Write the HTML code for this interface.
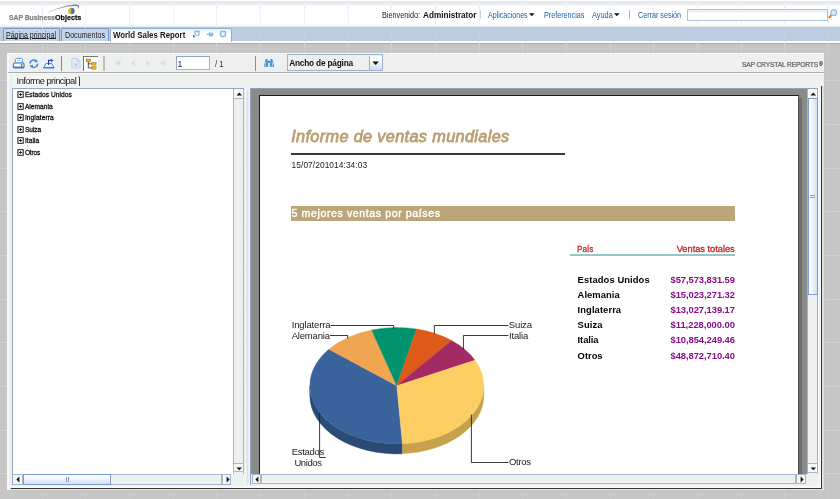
<!DOCTYPE html>
<html><head><meta charset="utf-8"><title>World Sales Report</title>
<style>
html,body{margin:0;padding:0}
body{width:840px;height:499px;overflow:hidden;background:#c6c6c6;position:relative;font-family:"Liberation Sans",Arial,sans-serif}
.abs{position:absolute}
.t{position:absolute;white-space:nowrap;line-height:12px;height:12px;font-family:"Liberation Sans",Arial,sans-serif}
div{position:absolute;box-sizing:border-box}
</style></head><body><div id="root" style="left:0;top:0;width:840px;height:499px;overflow:hidden;will-change:transform">
<!-- header -->
<div style="left:0;top:0;width:840px;height:27px;background:linear-gradient(#fff 0,#fbfbfd 1px,#e3e7ee 1.6px,#e6e9f0 3.5px,#f4f5f8 5px,#fff 6px,#fff 24px,#e4eaf3 27px)"></div>
<div style="left:0;top:26.6px;width:840px;height:14.4px;background:#bccde1;border-top:1px solid #b3c6de"></div>
<div style="left:0;top:41px;width:840px;height:2px;background:#fdfdfd"></div>
<div style="left:0;top:43px;width:840px;height:1px;background:#a9a9a9"></div>
<!-- tabs -->
<div style="left:3px;top:28px;width:57px;height:13px;background:#c5d5e9;border:1px solid #7a97bf;border-bottom:none;border-radius:2px 2px 0 0"></div>
<div style="left:61px;top:28px;width:48px;height:13px;background:#c5d5e9;border:1px solid #7a97bf;border-bottom:none;border-radius:2px 2px 0 0"></div>
<!-- grid overlay (faint) -->
<div style="left:0;top:0;width:840px;height:499px;clip-path:inset(0px 0 472px 0);background:repeating-linear-gradient(90deg,transparent 0,transparent 41.75px,#eef0f8 41.75px,#eef0f8 42.75px,transparent 42.75px,transparent 43.68px)"></div>
<div style="left:0;top:0;width:840px;height:499px;clip-path:inset(27px 0 458px 0);background:repeating-linear-gradient(90deg,transparent 0,transparent 41.75px,#c1d1e4 41.75px,#c1d1e4 42.75px,transparent 42.75px,transparent 43.68px)"></div>
<div style="left:0;top:0;width:840px;height:499px;clip-path:inset(41px 0 456px 0);background:repeating-linear-gradient(90deg,transparent 0,transparent 41.75px,#eef0f8 41.75px,#eef0f8 42.75px,transparent 42.75px,transparent 43.68px)"></div>
<div style="left:0;top:0;width:840px;height:499px;clip-path:inset(43px 0 446px 0);background:repeating-linear-gradient(90deg,transparent 0,transparent 41.75px,#cfcfd3 41.75px,#cfcfd3 42.75px,transparent 42.75px,transparent 43.68px)"></div>
<div style="left:0;top:0;width:840px;height:499px;clip-path:inset(53px 0 0px 0);background:repeating-linear-gradient(90deg,transparent 0,transparent 41.75px,#cbcbce 41.75px,#cbcbce 42.75px,transparent 42.75px,transparent 43.68px),repeating-linear-gradient(180deg,transparent 0,transparent 36.5px,#d0d0d4 36.5px,#d0d0d4 37.5px,transparent 37.5px,transparent 43.68px)"></div>

<div style="left:109.5px;top:28px;width:122px;height:14px;background:linear-gradient(#e9f0f8 0,#fff 5px);border:1px solid #93aed0;border-bottom:none;border-radius:2px 2px 0 0"></div>

<!-- logo -->
<svg class="abs" style="left:0;top:0" width="100" height="27" viewBox="0 0 100 27">
<defs><linearGradient id="sw" x1="0" x2="1" y1="0" y2="0"><stop offset="0" stop-color="#c8c8c8"/><stop offset="0.6" stop-color="#9a9a9a"/><stop offset="1" stop-color="#7c7c7c"/></linearGradient>
<linearGradient id="bl" x1="0" x2="1" y1="0" y2="0"><stop offset="0" stop-color="#f08418"/><stop offset="0.28" stop-color="#f6c21c"/><stop offset="0.5" stop-color="#46b03c"/><stop offset="0.76" stop-color="#2c6cd2"/><stop offset="1" stop-color="#b23ea2"/></linearGradient></defs>
<path d="M45.6 13.4 C55 8.6 68 4.4 76 4.6 C79.6 4.8 80 7 78.2 9.6 C78.8 7.4 78.2 6.2 75.8 6 C68.5 5.6 56 9.2 45.6 13.4Z" fill="url(#sw)"/>
<circle cx="71.4" cy="10.9" r="3.25" fill="url(#bl)"/>
</svg>
<span id="t0" class="t" style="left:9.00px;top:12.17px;font-size:7.6px;color:#7e7e7e;font-weight:bold;transform:scaleX(0.8898);transform-origin:left 50%;-webkit-text-stroke:0.25px #7e7e7e;">SAP Business</span><span id="t1" class="t" style="left:55.40px;top:12.10px;font-size:7.8px;color:#111;font-weight:bold;transform:scaleX(0.9193);transform-origin:left 50%;-webkit-text-stroke:0.25px #111;">Objects</span>
<!-- header right -->
<span id="t2" class="t" style="left:382.40px;top:9.39px;font-size:8.7px;color:#222;transform:scaleX(0.8369);transform-origin:left 50%;">Bienvenido:</span><span id="t3" class="t" style="left:422.90px;top:9.39px;font-size:8.7px;color:#111;font-weight:bold;transform:scaleX(0.9391);transform-origin:left 50%;">Administrator</span>
<div style="left:479.5px;top:10px;width:1px;height:9px;background:#c5d2e4"></div>
<span id="t4" class="t" style="left:488.30px;top:9.39px;font-size:8.7px;color:#1b5fa8;transform:scaleX(0.8118);transform-origin:left 50%;">Aplicaciones</span>
<svg class="abs" style="left:529px;top:13px" width="6" height="4"><path d="M0 0.3H5.6L2.8 3.3Z" fill="#111"/></svg>
<span id="t5" class="t" style="left:543.60px;top:9.39px;font-size:8.7px;color:#1b5fa8;transform:scaleX(0.8282);transform-origin:left 50%;">Preferencias</span><span id="t6" class="t" style="left:592.10px;top:9.39px;font-size:8.7px;color:#1b5fa8;transform:scaleX(0.8495);transform-origin:left 50%;">Ayuda</span>
<svg class="abs" style="left:614px;top:13px" width="6" height="4"><path d="M0 0.3H5.6L2.8 3.3Z" fill="#111"/></svg>
<div style="left:629px;top:10px;width:1px;height:9px;background:#9db7d6"></div>
<span id="t7" class="t" style="left:637.90px;top:9.39px;font-size:8.7px;color:#1b5fa8;transform:scaleX(0.8264);transform-origin:left 50%;">Cerrar sesión</span>
<div style="left:687px;top:9px;width:141px;height:12px;background:linear-gradient(#f0f0f0 0,#f0f0f0 2px,#fff 3px);border:1px solid #b0c1da"></div>
<svg class="abs" style="left:827px;top:7px" width="13" height="13" viewBox="0 0 13 13">
<path d="M2.4 10.2L4.6 8" stroke="#dc8418" stroke-width="2.2" stroke-linecap="round"/>
<circle cx="6.7" cy="5.6" r="3" fill="#dcebf8" stroke="#8fc0e8" stroke-width="1.2"/>
</svg>
<!-- tab labels -->
<span id="t8" class="t" style="left:6.20px;top:28.79px;font-size:8.7px;color:#222;transform:scaleX(0.8087);transform-origin:left 50%;text-decoration:underline;text-underline-offset:0.3px;text-decoration-thickness:0.9px;">Página principal</span><span id="t9" class="t" style="left:64.50px;top:28.79px;font-size:8.7px;color:#222;transform:scaleX(0.8200);transform-origin:left 50%;">Documentos</span><span id="t10" class="t" style="left:113.40px;top:28.79px;font-size:8.7px;color:#111;font-weight:bold;transform:scaleX(0.9039);transform-origin:left 50%;">World Sales Report</span>
<svg class="abs" style="left:192px;top:30px" width="36" height="9" viewBox="0 0 36 9">
<rect x="3.2" y="1.3" width="3.8" height="3.9" fill="#fff" stroke="#86b9e6" stroke-width="1.1"/><rect x="2.7" y="0.8" width="4.9" height="1.5" fill="#86b9e6"/>
<path d="M1 4.6V7.2H3.4Z" fill="#2457b8"/>
<path d="M14.6 4.3H17.2" stroke="#5ea2dc" stroke-width="0.9"/><path d="M17.6 2.4V5.8H20.8V2.8" fill="#a9cdee" stroke="#5ea2dc" stroke-width="0.9"/>
<rect x="28.3" y="1.2" width="5.4" height="5.4" rx="1.2" fill="#a9d0f0" stroke="#73afe3" stroke-width="1"/><path d="M29.6 2.5L32.4 5.3M32.4 2.5L29.6 5.3" stroke="#fff" stroke-width="1.1"/>
</svg>
<!-- viewer panel -->
<div style="left:7px;top:53px;width:817.4px;height:437.2px;background:#e0e0e0"></div>
<div style="left:7px;top:53px;width:817.4px;height:33.2px;background:#eef0f0;border-top:1px solid #fafafa"></div>
<div style="left:11.3px;top:86.2px;width:810.9px;height:402.6px;background:#363636"></div>
<div style="left:7px;top:86.2px;width:814.2px;height:401.5px;background:#eef0f0"></div>
<div style="left:7px;top:486px;width:814.2px;height:1.7px;background:#f8f8f8"></div>
<div style="left:7px;top:53px;width:1.6px;height:437.2px;background:#fafafa"></div>
<div style="left:8px;top:72px;width:816.4px;height:1px;background:#acacac"></div>
<div style="left:8px;top:73px;width:816.4px;height:1px;background:#f8f8f8"></div>
<!-- toolbar icons -->
<svg class="abs" style="left:12px;top:56px" width="90" height="15" viewBox="0 0 90 15">
<!-- printer -->
<path d="M3.4 7.2V3.2L4.6 2.4H9.4L10.4 3.2V7.2Z" fill="#fff" stroke="#5a8fd0" stroke-width="0.9"/>
<path d="M4.8 4.2H8.8" stroke="#9cc0ea" stroke-width="0.9"/>
<rect x="1.4" y="7" width="10.6" height="5" rx="1" fill="#fff" stroke="#2f74c9" stroke-width="1.1"/>
<path d="M1.6 11.2H11.8" stroke="#2f74c9" stroke-width="1.3"/>
<rect x="8.8" y="8" width="1.6" height="1.4" fill="#2e9a3e"/><rect x="8.8" y="9.4" width="1.6" height="1.2" fill="#b8442e"/>
<!-- refresh -->
<path d="M18 7.6A3.6 3.6 0 0 1 24.4 5.3" fill="none" stroke="#3b8ede" stroke-width="1.5"/><path d="M23.4 3L26.2 5.8L22.6 6.4Z" fill="#3b8ede"/>
<path d="M25.6 7.6A3.6 3.6 0 0 1 19.2 10" fill="none" stroke="#3b8ede" stroke-width="1.5"/><path d="M20.2 12.2L17.4 9.4L21 8.8Z" fill="#3b8ede"/>
<!-- export -->
<path d="M31.6 11.6L34 7.4H39.6L42 11.6Z" fill="#eaf2fb" stroke="#3b86d6" stroke-width="1"/>
<path d="M31.4 11.8H42.2" stroke="#3b86d6" stroke-width="1.4"/>
<path d="M36.6 9V4.4H39.4" fill="none" stroke="#1f3f86" stroke-width="1.1"/><path d="M39 2.4L41.6 4.4L39 6.4Z" fill="#2a6fc8"/>
<!-- doc disabled -->
<path d="M59.8 2.4H65L68 5.2V12H59.8Z" fill="#e3ebf5" stroke="#c3d2e6" stroke-width="1"/>
<path d="M65 2.4V5.2H68" fill="none" stroke="#c3d2e6" stroke-width="0.9"/>
<path d="M62.2 7.2L65.6 10.2M65.6 7.2L62.2 10.2" stroke="#a9bcd6" stroke-width="0.9"/>
</svg>
<div style="left:60.6px;top:56px;width:1.3px;height:15px;background:#8c8c8c"></div>
<div style="left:83px;top:56px;width:15px;height:15px;background:#fff;border-left:1.1px solid #767676;border-top:1.1px solid #767676"></div>
<svg class="abs" style="left:84px;top:56px" width="14" height="15" viewBox="0 0 14 15">
<path d="M4.3 6V11.9H8M4.3 7.8H8" fill="none" stroke="#222" stroke-width="0.8"/>
<rect x="2.1" y="3" width="4.5" height="2.8" fill="#f2b51f" stroke="#8a6510" stroke-width="0.45"/>
<rect x="7.9" y="6.5" width="4.2" height="2.6" fill="#f2b51f" stroke="#8a6510" stroke-width="0.45"/>
<rect x="7.9" y="10.6" width="4.2" height="2.6" fill="#f2b51f" stroke="#8a6510" stroke-width="0.45"/>
</svg>
<div style="left:103.4px;top:56px;width:1.8px;height:15px;background:#bcbcbc"></div>
<svg class="abs" style="left:112px;top:58px" width="60" height="10" viewBox="0 0 60 10">
<g fill="#d0dbe9"><rect x="4" y="2" width="1.2" height="6"/><path d="M8.4 2V8L5 5Z"/>
<path d="M22.6 2V8L19.2 5Z"/>
<path d="M34.4 2V8L37.8 5Z"/>
<path d="M49 2V8L52.4 5Z"/><rect x="52.2" y="2" width="1.2" height="6"/></g>
</svg>
<div style="left:176px;top:55.6px;width:33.6px;height:14.4px;background:#fff;border:1px solid #a3b5cf;border-top-color:#8fa4c3;border-left-color:#8fa4c3"></div>
<span id="t11" class="t" style="left:177.40px;top:58.32px;font-size:8.6px;color:#222;">1</span><span id="t12" class="t" style="left:215.00px;top:58.32px;font-size:8.6px;color:#333;transform:scaleX(0.9098);transform-origin:left 50%;">/ 1</span>
<div style="left:255px;top:56px;width:1.1px;height:15px;background:#8e8e8e"></div>
<svg class="abs" style="left:263px;top:58px" width="12" height="10" viewBox="0 0 12 10">
<path d="M2.7 1H4.5L5.3 8.8H0.7Z" fill="#4793d8"/><path d="M7.5 1H9.3L11.3 8.8H6.7Z" fill="#4793d8"/><rect x="4.4" y="2.8" width="3.2" height="2.3" fill="#4793d8"/>
<path d="M2.6 4.2L2.2 8.2M9.3 4.2L9.8 8.2" stroke="#b5d7f2" stroke-width="0.9"/>
</svg>
<div style="left:286.8px;top:54.2px;width:96.6px;height:17.3px;background:#eef0f0;border:1.4px solid #9bb1cf"></div>
<div style="left:369.4px;top:55.6px;width:12.6px;height:14.5px;background:linear-gradient(#fff,#f4f7fb 40%,#cfdbec);border-left:1px solid #9bb1cf"></div>
<svg class="abs" style="left:372px;top:60.5px" width="8" height="5"><path d="M0.3 0.4H7L3.65 3.9Z" fill="#111"/></svg>
<span id="t13" class="t" style="left:289.20px;top:57.42px;font-size:8.3px;color:#111;font-weight:bold;letter-spacing:-0.203px;">Ancho de página</span><span id="t14" class="t" style="left:742.00px;top:59.38px;font-size:6.7px;color:#646464;letter-spacing:-0.165px;-webkit-text-stroke:0.22px #646464;">SAP CRYSTAL REPORTS</span><span id="t15" class="t" style="left:819.00px;top:57.90px;font-size:5.2px;color:#5a5a5a;font-weight:bold;-webkit-text-stroke:0.2px #5a5a5a;">®</span>
<!-- tab Informe principal -->
<div style="left:13px;top:75px;width:66.5px;height:13px;background:#f3f4f4"></div>
<span id="t16" class="t" style="left:16.60px;top:74.98px;font-size:9.3px;color:#1a1a1a;letter-spacing:-0.533px;">Informe principal</span>
<div style="left:77.6px;top:75.8px;width:2.8px;height:9.8px;border-right:1.3px solid #3a3a3a;border-top:1px solid #777;border-radius:0 2.5px 0 0"></div>
<!-- tree panel -->
<div style="left:12px;top:87.6px;width:232.4px;height:397.8px;background:#fff;border:1px solid #93a8c6"></div>
<!-- tree v scrollbar -->
<div style="left:232.8px;top:88.8px;width:10.8px;height:385.4px;background:#eef0f0;border-left:1px solid #a3b7d3;border-right:1px solid #a3b7d3"></div>
<div style="left:232.8px;top:88.6px;width:10.8px;height:10.6px;background:#f5f6f6;border:1px solid #a3b7d3;border-top:none"></div>
<svg class="abs" style="left:235.6px;top:92.2px" width="7" height="4" viewBox="0 0 7 4"><path d="M0.5 3.4H6.1L3.3 0.6Z" fill="#111"/></svg>
<div style="left:232.8px;top:462.6px;width:10.8px;height:9.8px;background:#f5f6f6;border:1px solid #a3b7d3"></div>
<svg class="abs" style="left:235.5px;top:466.7px" width="7" height="4" viewBox="0 0 7 4"><path d="M0.5 0.4H6.1L3.3 3.2Z" fill="#111"/></svg>
<!-- tree h scrollbar -->
<div style="left:13px;top:474.2px;width:230.6px;height:10.8px;background:#eef0f0"></div>
<div style="left:13px;top:474.2px;width:208.6px;height:10.6px;background:#eef0f0;border:1px solid #a3b7d3;border-left:none"></div>
<div style="left:13px;top:474.2px;width:10.2px;height:10.6px;background:#f5f6f6;border:1px solid #a3b7d3;border-left:none"></div>
<svg class="abs" style="left:15.6px;top:476.2px" width="4" height="7" viewBox="0 0 4 7"><path d="M3.4 0.4V6.6L0.4 3.5Z" fill="#111"/></svg>
<div style="left:23.2px;top:474.2px;width:88.2px;height:10.6px;background:linear-gradient(#fdfdfe,#f0f3f9 45%,#d3deee);border:1px solid #7b9ed4"></div>
<div style="left:66px;top:476.6px;width:1px;height:5.4px;background:#7b9ed4"></div><div style="left:68.4px;top:476.6px;width:1px;height:5.4px;background:#7b9ed4"></div>
<div style="left:221.6px;top:474.2px;width:9.9px;height:10.6px;background:#f5f6f6;border:1px solid #a3b7d3"></div>
<svg class="abs" style="left:225.5px;top:476.4px" width="4" height="7" viewBox="0 0 4 7"><path d="M0.6 0.4V6.6L3.6 3.5Z" fill="#111"/></svg><svg class="abs" style="left:16.5px;top:91.00px" width="7" height="7" viewBox="0 0 7 7"><rect x="0.9" y="0.7" width="5.3" height="5.6" fill="#fff" stroke="#111" stroke-width="0.95"/><path d="M2 3.5H5.1M3.55 2V5" stroke="#111" stroke-width="0.85"/></svg><span id="t17" class="t" style="left:24.90px;top:89.01px;font-size:6.6px;color:#111;letter-spacing:0.047px;-webkit-text-stroke:0.28px #111;">Estados Unidos</span><svg class="abs" style="left:16.5px;top:102.50px" width="7" height="7" viewBox="0 0 7 7"><rect x="0.9" y="0.7" width="5.3" height="5.6" fill="#fff" stroke="#111" stroke-width="0.95"/><path d="M2 3.5H5.1M3.55 2V5" stroke="#111" stroke-width="0.85"/></svg><span id="t18" class="t" style="left:24.90px;top:100.51px;font-size:6.6px;color:#111;letter-spacing:0.043px;-webkit-text-stroke:0.28px #111;">Alemania</span><svg class="abs" style="left:16.5px;top:114.00px" width="7" height="7" viewBox="0 0 7 7"><rect x="0.9" y="0.7" width="5.3" height="5.6" fill="#fff" stroke="#111" stroke-width="0.95"/><path d="M2 3.5H5.1M3.55 2V5" stroke="#111" stroke-width="0.85"/></svg><span id="t19" class="t" style="left:24.90px;top:112.01px;font-size:6.6px;color:#111;letter-spacing:0.105px;-webkit-text-stroke:0.28px #111;">Inglaterra</span><svg class="abs" style="left:16.5px;top:125.50px" width="7" height="7" viewBox="0 0 7 7"><rect x="0.9" y="0.7" width="5.3" height="5.6" fill="#fff" stroke="#111" stroke-width="0.95"/><path d="M2 3.5H5.1M3.55 2V5" stroke="#111" stroke-width="0.85"/></svg><span id="t20" class="t" style="left:24.90px;top:123.51px;font-size:6.6px;color:#111;letter-spacing:-0.025px;-webkit-text-stroke:0.28px #111;">Suiza</span><svg class="abs" style="left:16.5px;top:137.00px" width="7" height="7" viewBox="0 0 7 7"><rect x="0.9" y="0.7" width="5.3" height="5.6" fill="#fff" stroke="#111" stroke-width="0.95"/><path d="M2 3.5H5.1M3.55 2V5" stroke="#111" stroke-width="0.85"/></svg><span id="t21" class="t" style="left:24.90px;top:135.01px;font-size:6.6px;color:#111;letter-spacing:0.052px;-webkit-text-stroke:0.28px #111;">Italia</span><svg class="abs" style="left:16.5px;top:148.50px" width="7" height="7" viewBox="0 0 7 7"><rect x="0.9" y="0.7" width="5.3" height="5.6" fill="#fff" stroke="#111" stroke-width="0.95"/><path d="M2 3.5H5.1M3.55 2V5" stroke="#111" stroke-width="0.85"/></svg><span id="t22" class="t" style="left:24.90px;top:146.51px;font-size:6.6px;color:#111;letter-spacing:-0.181px;-webkit-text-stroke:0.28px #111;">Otros</span>
<!-- splitter -->
<svg class="abs" style="left:245px;top:88px" width="5" height="398" viewBox="0 0 5 398"><defs><pattern id="zz" width="5" height="3.6" patternUnits="userSpaceOnUse"><path d="M1.6 0L3.4 1.8L1.6 3.6" fill="none" stroke="#bfcbdc" stroke-width="0.8"/></pattern></defs><rect width="5" height="398" fill="#f3f4f5"/><rect y="1.5" width="5" height="396" fill="url(#zz)"/></svg>
<!-- page area -->
<div style="left:250.2px;top:87.8px;width:567.6px;height:397.4px;background:#8a8a8a;border-left:1px solid #8fa3bf;border-top:1px solid #8fa3bf"></div>
<div style="left:798.8px;top:98px;width:3px;height:380px;background:#6e6e6e"></div>
<div style="left:818px;top:88px;width:3.2px;height:398px;background:#f5f6f6"></div>
<div style="left:259px;top:95px;width:539.8px;height:385px;background:#fff;border:1.1px solid #1c1c1c;border-right:0.8px solid #4e4e4e"></div>
<!-- page v scrollbar -->
<div style="left:807.2px;top:88.8px;width:10.8px;height:385.5px;background:#eef0f0;border-left:1px solid #a3b7d3;border-right:1px solid #a3b7d3"></div>
<div style="left:807.2px;top:88.6px;width:10.8px;height:10.4px;background:#f5f6f6;border:1px solid #a3b7d3;border-top:none"></div>
<svg class="abs" style="left:810.3px;top:92.2px" width="7" height="4" viewBox="0 0 7 4"><path d="M0.5 3.4H6.1L3.3 0.6Z" fill="#111"/></svg>
<div style="left:807.5px;top:98.4px;width:10.3px;height:196.4px;background:linear-gradient(90deg,#fdfdfe,#f0f3f9 45%,#d3deee);border:1px solid #7b9ed4"></div>
<div style="left:810.4px;top:195.4px;width:4.8px;height:1px;background:#7b9ed4"></div><div style="left:810.4px;top:197.4px;width:4.8px;height:1px;background:#7b9ed4"></div>
<div style="left:807.2px;top:462.6px;width:10.8px;height:10px;background:#f5f6f6;border:1px solid #a3b7d3"></div>
<svg class="abs" style="left:810.1px;top:466.7px" width="7" height="4" viewBox="0 0 7 4"><path d="M0.5 0.4H6.1L3.3 3.2Z" fill="#111"/></svg>
<!-- page h scrollbar -->
<div style="left:251.2px;top:474.2px;width:566.6px;height:11.6px;background:#eef0f0"></div>
<div style="left:261.3px;top:474.2px;width:534.4px;height:10.2px;background:#eef0f0;border:1px solid #a3b7d3"></div>
<div style="left:251.6px;top:474.2px;width:9.7px;height:10.2px;background:#f5f6f6;border:1px solid #a3b7d3"></div>
<svg class="abs" style="left:254.7px;top:476.2px" width="4" height="7" viewBox="0 0 4 7"><path d="M3.4 0.4V6.6L0.4 3.5Z" fill="#111"/></svg>
<div style="left:795.7px;top:474.2px;width:10.8px;height:10.2px;background:#f5f6f6;border:1px solid #a3b7d3"></div>
<svg class="abs" style="left:799.6px;top:476.4px" width="4" height="7" viewBox="0 0 4 7"><path d="M0.6 0.4V6.6L3.6 3.5Z" fill="#111"/></svg><!-- report content -->
<span id="t23" class="t" style="left:291.20px;top:130.15px;font-size:16.3px;color:#b99f72;font-style:italic;letter-spacing:0.344px;-webkit-text-stroke:0.8px #b99f72;">Informe de ventas mundiales</span>
<div style="left:291px;top:153px;width:274px;height:2px;background:#3a3a3a"></div>
<span id="t24" class="t" style="left:291.60px;top:158.59px;font-size:8.4px;color:#222;letter-spacing:0.057px;">15/07/201014:34:03</span>
<div style="left:290.6px;top:206.2px;width:444.6px;height:15.3px;background:#bba579"></div>
<span id="t25" class="t" style="left:291.60px;top:207.33px;font-size:10.6px;color:#fff;letter-spacing:0.589px;-webkit-text-stroke:0.4px #fff;">5 mejores ventas por países</span><span id="t26" class="t" style="left:576.90px;top:242.51px;font-size:9.2px;color:#bd2328;transform:scaleX(0.8809);transform-origin:left 50%;-webkit-text-stroke:0.3px #bd2328;">País</span><span id="t27" class="t" style="right:105.60px;top:242.51px;font-size:9.2px;color:#bd2328;transform:scaleX(1.0049);transform-origin:right 50%;-webkit-text-stroke:0.3px #bd2328;">Ventas totales</span>
<div style="left:570.4px;top:254.4px;width:164.8px;height:1.7px;background:#97c6c8"></div>
<span id="t28" class="t" style="left:577.60px;top:274.14px;font-size:9.4px;color:#000;font-weight:bold;letter-spacing:0.089px;">Estados Unidos</span><span id="t29" class="t" style="right:105.05px;top:274.14px;font-size:9.4px;color:#8a0a8a;font-weight:bold;letter-spacing:-0.052px;">$57,573,831.59</span><span id="t30" class="t" style="left:577.60px;top:289.22px;font-size:9.4px;color:#000;font-weight:bold;letter-spacing:0.045px;">Alemania</span><span id="t31" class="t" style="right:105.05px;top:289.22px;font-size:9.4px;color:#8a0a8a;font-weight:bold;letter-spacing:-0.052px;">$15,023,271.32</span><span id="t32" class="t" style="left:577.60px;top:304.30px;font-size:9.4px;color:#000;font-weight:bold;letter-spacing:0.085px;">Inglaterra</span><span id="t33" class="t" style="right:105.05px;top:304.30px;font-size:9.4px;color:#8a0a8a;font-weight:bold;letter-spacing:-0.052px;">$13,027,139.17</span><span id="t34" class="t" style="left:577.60px;top:319.38px;font-size:9.4px;color:#000;font-weight:bold;letter-spacing:0.125px;">Suiza</span><span id="t35" class="t" style="right:105.01px;top:319.38px;font-size:9.4px;color:#8a0a8a;font-weight:bold;letter-spacing:-0.012px;">$11,228,000.00</span><span id="t36" class="t" style="left:577.60px;top:334.46px;font-size:9.4px;color:#000;font-weight:bold;letter-spacing:-0.075px;">Italia</span><span id="t37" class="t" style="right:105.05px;top:334.46px;font-size:9.4px;color:#8a0a8a;font-weight:bold;letter-spacing:-0.052px;">$10,854,249.46</span><span id="t38" class="t" style="left:577.60px;top:349.54px;font-size:9.4px;color:#000;font-weight:bold;letter-spacing:-0.004px;">Otros</span><span id="t39" class="t" style="right:105.05px;top:349.54px;font-size:9.4px;color:#8a0a8a;font-weight:bold;letter-spacing:-0.052px;">$48,872,710.40</span><svg class="abs" style="left:0;top:0" width="840" height="499" viewBox="0 0 840 499"><path d="M402.41 443.78 A87.00 58.20 0 0 1 309.80 385.70 L309.80 395.70 A87.00 58.20 0 0 0 402.41 453.78 Z" fill="#2b4a75" stroke="#2b4a75" stroke-width="0.4"/><path d="M483.80 385.70 A87.00 58.20 0 0 1 402.41 443.78 L402.41 453.78 A87.00 58.20 0 0 0 483.80 395.70 Z" fill="#c7a24c" stroke="#c7a24c" stroke-width="0.4"/><path d="M396.80 385.70 L402.41 443.78 A87.00 58.20 0 0 1 328.88 349.33 Z" fill="#3a639b" stroke="#3a639b" stroke-width="0.4"/><path d="M396.80 385.70 L328.88 349.33 A87.00 58.20 0 0 1 371.67 329.98 Z" fill="#f0a551" stroke="#f0a551" stroke-width="0.4"/><path d="M396.80 385.70 L371.67 329.98 A87.00 58.20 0 0 1 416.61 329.03 Z" fill="#00936d" stroke="#00936d" stroke-width="0.4"/><path d="M396.80 385.70 L416.61 329.03 A87.00 58.20 0 0 1 451.53 340.46 Z" fill="#de5a19" stroke="#de5a19" stroke-width="0.4"/><path d="M396.80 385.70 L451.53 340.46 A87.00 58.20 0 0 1 474.95 360.13 Z" fill="#a42a63" stroke="#a42a63" stroke-width="0.4"/><path d="M396.80 385.70 L474.95 360.13 A87.00 58.20 0 0 1 402.41 443.78 Z" fill="#fdce63" stroke="#fdce63" stroke-width="0.4"/><path d="M330.5 325.5 H393.7 V329" fill="none" stroke="#222" stroke-width="0.9"/><path d="M330 335.5 H347.7 V338.5" fill="none" stroke="#222" stroke-width="0.9"/><path d="M508.4 325.5 H434.4 V333.5" fill="none" stroke="#222" stroke-width="0.9"/><path d="M508.4 335.5 H463.4 V349.5" fill="none" stroke="#222" stroke-width="0.9"/><path d="M508.4 462.5 H471.4 V414.5" fill="none" stroke="#222" stroke-width="0.9"/><path d="M325.7 457.5 H319.6 V412.8" fill="none" stroke="#222" stroke-width="0.9"/></svg><span id="t40" class="t" style="left:291.70px;top:319.41px;font-size:9.5px;color:#222;letter-spacing:-0.149px;">Inglaterra</span><span id="t41" class="t" style="left:291.70px;top:330.01px;font-size:9.5px;color:#222;letter-spacing:-0.187px;">Alemania</span><span id="t42" class="t" style="left:508.80px;top:319.41px;font-size:9.5px;color:#222;letter-spacing:-0.141px;">Suiza</span><span id="t43" class="t" style="left:509.00px;top:330.01px;font-size:9.5px;color:#222;letter-spacing:-0.176px;">Italia</span><span id="t44" class="t" style="left:509.00px;top:456.11px;font-size:9.5px;color:#222;letter-spacing:-0.309px;">Otros</span><span id="t45" class="t" style="left:291.80px;top:446.21px;font-size:9.5px;color:#222;letter-spacing:-0.321px;">Estados</span><span id="t46" class="t" style="left:294.40px;top:456.61px;font-size:9.5px;color:#222;letter-spacing:-0.396px;">Unidos</span>
</div></body></html>
